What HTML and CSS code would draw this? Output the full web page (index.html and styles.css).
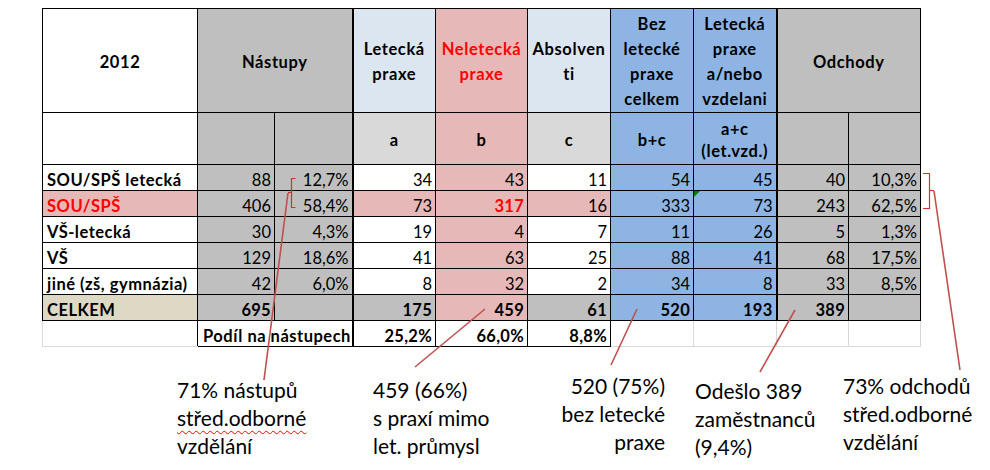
FILE: index.html
```html
<!DOCTYPE html>
<html lang="cs">
<head>
<meta charset="utf-8">
<title>2012 Nástupy a odchody</title>
<link rel="stylesheet" href="styles.css">
</head>
<body>
<div class="page">
  <table class="sheet">
    <colgroup>
      <col class="w-label"><col class="w-n1"><col class="w-n2"><col class="w-a"><col class="w-b"><col class="w-c"><col class="w-bc"><col class="w-ac"><col class="w-o1"><col class="w-o2">
    </colgroup>
    <tr class="head1">
      <th class="wh">2012</th>
      <th class="g" colspan="2">Nástupy</th>
      <th class="lb thick">Letecká<br>praxe</th>
      <th class="p red">Neletecká<br>praxe</th>
      <th class="lb">Absolven<br>ti</th>
      <th class="b">Bez<br>letecké<br>praxe<br>celkem</th>
      <th class="b">Letecká<br>praxe<br>a/nebo<br>vzdelani</th>
      <th class="g thick" colspan="2">Odchody</th>
    </tr>
    <tr class="head2">
      <th class="wh"></th>
      <th class="g"></th>
      <th class="g"></th>
      <th class="lg thick">a</th>
      <th class="p">b</th>
      <th class="lg">c</th>
      <th class="b">b+c</th>
      <th class="b">a+c<br>(let.vzd.)</th>
      <th class="g thick"></th>
      <th class="g"></th>
    </tr>
    <tr class="row">
      <td class="lbl wh">SOU/SPŠ letecká</td>
      <td class="g">88</td><td class="g">12,7%</td>
      <td class="wh thick">34</td><td class="p">43</td><td class="wh">11</td>
      <td class="b">54</td><td class="b">45</td>
      <td class="g thick">40</td><td class="g">10,3%</td>
    </tr>
    <tr class="row">
      <td class="lbl p red">SOU/SPŠ</td>
      <td class="g">406</td><td class="g">58,4%</td>
      <td class="p thick">73</td><td class="p red strong">317</td><td class="p">16</td>
      <td class="b">333</td><td class="b flag">73</td>
      <td class="g thick">243</td><td class="g">62,5%</td>
    </tr>
    <tr class="row">
      <td class="lbl wh">VŠ-letecká</td>
      <td class="g">30</td><td class="g">4,3%</td>
      <td class="wh thick">19</td><td class="p">4</td><td class="wh">7</td>
      <td class="b">11</td><td class="b">26</td>
      <td class="g thick">5</td><td class="g">1,3%</td>
    </tr>
    <tr class="row">
      <td class="lbl wh">VŠ</td>
      <td class="g">129</td><td class="g">18,6%</td>
      <td class="wh thick">41</td><td class="p">63</td><td class="wh">25</td>
      <td class="b">88</td><td class="b">41</td>
      <td class="g thick">68</td><td class="g">17,5%</td>
    </tr>
    <tr class="row">
      <td class="lbl wh">jiné (zš, gymnázia)</td>
      <td class="g">42</td><td class="g">6,0%</td>
      <td class="wh thick">8</td><td class="p">32</td><td class="wh">2</td>
      <td class="b">34</td><td class="b">8</td>
      <td class="g thick">33</td><td class="g">8,5%</td>
    </tr>
    <tr class="row total">
      <td class="lbl be">CELKEM</td>
      <td class="g">695</td><td class="g"></td>
      <td class="g thick">175</td><td class="p">459</td><td class="g">61</td>
      <td class="b">520</td><td class="b">193</td>
      <td class="g thick">389</td><td class="g"></td>
    </tr>
    <tr class="row share">
      <td class="grid first"></td>
      <td class="wh podil" colspan="2">Podíl na nástupech</td>
      <td class="wh thick">25,2%</td><td class="wh">66,0%</td><td class="wh">8,8%</td>
      <td class="grid"></td><td class="grid"></td><td class="grid"></td><td class="grid"></td>
    </tr>
  </table>

  <div class="notes">
    <div class="note n1">71% nástupů<br><span class="spell">střed.odborné</span><br>vzdělání</div>
    <div class="note n2">459 (66%)<br>s praxí mimo<br>let. průmysl</div>
    <div class="note n3">520 (75%)<br>bez letecké<br>praxe</div>
    <div class="note n4">Odešlo 389<br>zaměstnanců<br>(9,4%)</div>
    <div class="note n5">73% odchodů<br>střed.odborné<br>vzdělání</div>
  </div>

  <svg class="leaders" width="990" height="470" viewBox="0 0 990 470" aria-hidden="true">
    <g fill="none" stroke="#cc3333" stroke-width="1.2">
      <path d="M295.5,178.5 H291.5 V207.5 H295.5"/>
      <path d="M291.5,192.5 H288"/>
      <path d="M923,173.5 H929.5 V208.5 H923"/>
      <path d="M929.5,190.5 H934"/>
    </g>
    <g fill="none" stroke="#c0504d" stroke-width="1.6">
      <line x1="288" y1="193" x2="264" y2="380"/>
      <line x1="485" y1="309" x2="415" y2="367"/>
      <line x1="637" y1="309" x2="611" y2="365"/>
      <line x1="795" y1="310" x2="760" y2="372"/>
      <line x1="934" y1="191" x2="960" y2="370"/>
    </g>
  </svg>
</div>
</body>
</html>
```

FILE: styles.css
```css
html, body {
  margin: 0;
  padding: 0;
  background: #ffffff;
}

.page {
  position: relative;
  width: 990px;
  height: 470px;
  overflow: hidden;
  padding-top: 8px;
  box-sizing: border-box;
  font-family: Lato, "Open Sans", sans-serif;
  color: #000;
}

.sheet {
  margin-left: 42px;
  border-collapse: collapse;
  table-layout: fixed;
  width: 878px;
  font-size: 16.5px;
}

.w-label { width: 155px; }
.w-n1 { width: 77px; }
.w-n2 { width: 78px; }
.w-a { width: 83px; }
.w-b { width: 92px; }
.w-c { width: 83px; }
.w-bc { width: 83px; }
.w-ac { width: 83px; }
.w-o1 { width: 72px; }
.w-o2 { width: 72px; }

.sheet th,
.sheet td {
  border: 1px solid #000;
  padding: 0 3px;
  overflow: hidden;
  white-space: nowrap;
}

.sheet th {
  font-weight: 700;
  letter-spacing: 0.6px;
  text-align: center;
  vertical-align: middle;
  line-height: 25px;
}

.head1 { height: 103px; }
.head1 th { padding-top: 3px; }
.head2 { height: 52px; }
.head2 th { line-height: 22px; padding-top: 2px; }

.row { height: 26px; }
.row td {
  text-align: right;
  vertical-align: bottom;
  line-height: 18px;
  padding-bottom: 1px;
}

.row td.lbl {
  text-align: left;
  font-weight: 700;
  letter-spacing: 0.5px;
  padding-left: 4px;
}

.total td,
.share td {
  font-weight: 700;
  letter-spacing: 0.3px;
}
.share td.podil {
  text-align: left;
  letter-spacing: 0.5px;
  padding-left: 5px;
  padding-right: 0;
}

.thick { border-left-width: 2px !important; }

.wh { background: #ffffff; }
.g { background: #bfbfbf; }
.lg { background: #d9d9d9; }
.lb { background: #dce6f1; }
.p { background: #e6b8b7; }
.b { background: #8db4e2; }
.be { background: #ddd9c4; }

.red { color: #ff0000; }
.strong { font-weight: 700; letter-spacing: 0.3px; }

.share td.grid {
  background: #ffffff;
  border-color: #d9d9d9;
}
.share td.grid.first { border-right-color: #000; }

.flag { position: relative; }
.flag::before {
  content: "";
  position: absolute;
  left: 0;
  top: 0;
  border-top: 6px solid #008000;
  border-right: 6px solid transparent;
}

.notes {
  display: flex;
  align-items: flex-start;
  margin-top: 25px;
  font-size: 21px;
  line-height: 27.8px;
}

.note { flex: none; }
.n1 { margin-left: 177px; width: 196px; margin-top: 4px; }
.n2 { width: 170px; margin-top: 4px; }
.n3 { width: 122px; text-align: right; }
.n4 { margin-left: 30px; width: 148px; margin-top: 5px; }

.spell {
  text-decoration: underline wavy #ff0000;
  text-decoration-thickness: 1px;
  text-underline-offset: 4px;
  text-decoration-skip-ink: none;
}

.leaders {
  position: absolute;
  left: 0;
  top: 0;
  pointer-events: none;
}
```
